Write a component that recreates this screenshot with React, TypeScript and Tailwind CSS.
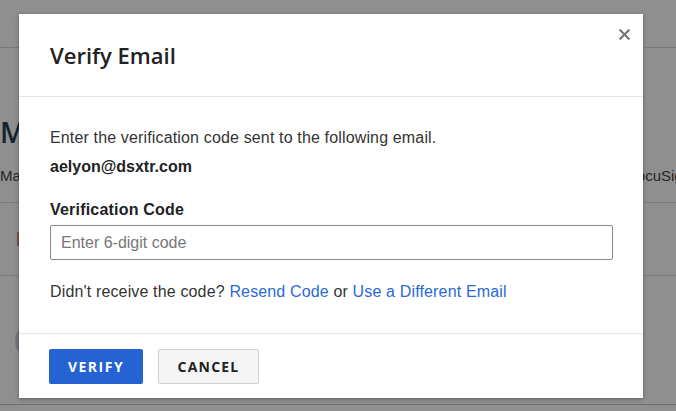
import { X } from "lucide-react";

const sans = "font-['Liberation_Sans',Arial,sans-serif]";
const heading = "font-['Open_Sans','Noto_Sans',sans-serif]";

function BackgroundPage() {
  return (
    <div className={`h-[411px] w-[676px] overflow-hidden bg-white ${sans}`}>
      <div className="h-[48px] border-b border-[#dcdcdc]" />
      <div className="flex h-[155px] flex-col border-b border-[#dcdcdc]">
        <div className={`mt-[66px] text-[28px] leading-[36px] font-semibold text-[#1f3f57] ${heading}`}>
          My Account
        </div>
        <div className="mt-[16px] flex justify-between whitespace-nowrap text-[15px] leading-[20px] text-[#444]">
          <span>Manage your profile and connected services</span>
          <span className="mr-[-15px]">Connected to DocuSign</span>
        </div>
      </div>
      <div className="flex h-[73px] items-center border-b border-[#dcdcdc]">
        <div className="ml-[17px] h-[14px] w-[12px] bg-[#c79a82]" />
      </div>
      <div className="flex h-[128px] items-start">
        <div className="ml-[15px] mt-[46px] h-[38px] w-[38px] rounded-full bg-[#cfcde0]" />
      </div>
      <div className="border-t border-[#c8c8c8]" />
    </div>
  );
}

function VerifyEmailModal() {
  return (
    <div className="absolute left-[19px] top-[14px] flex w-[624px] flex-col bg-white shadow-[0_1px_4px_rgba(0,0,0,0.35)]">
      <div className="relative flex h-[83px] items-center border-b border-[#e6e6e6] px-[31px]">
        <h2 className={`text-[22px] leading-[28px] font-semibold text-[#222] ${heading}`}>Verify Email</h2>
        <button className="absolute right-[8px] top-[10px] p-[2px] text-[#777]">
          <X size={17} strokeWidth={3.2} />
        </button>
      </div>
      <div className={`flex flex-col px-[31px] pt-[31px] pb-[31px] text-[16px] leading-[20px] text-[#333] ${sans}`}>
        <p className="tracking-[0.15px]">Enter the verification code sent to the following email.</p>
        <p className="mt-[9px] font-bold text-[#222]">aelyon@dsxtr.com</p>
        <label className="mt-[23px] font-bold tracking-[0.2px] text-[#222]">Verification Code</label>
        <input
          placeholder="Enter 6-digit code"
          className="mt-[5px] h-[35px] w-[563px] rounded-[2px] border border-[#8a8a8a] px-[10px] text-[16px] text-[#333] placeholder:text-[#777] outline-none"
        />
        <p className="mt-[22px] tracking-[0.15px]">
          Didn't receive the code?{" "}
          <a className="text-[#2a6ad6]">Resend Code</a> or{" "}
          <a className="text-[#2a6ad6]">Use a Different Email</a>
        </p>
      </div>
      <div className={`flex gap-[15px] border-t border-[#e6e6e6] px-[30px] pt-[15px] pb-[14px] ${heading}`}>
        <button className="h-[35px] w-[94px] rounded-[2px] bg-[#2463d1] text-[14px] font-bold tracking-[1.5px] text-white">
          VERIFY
        </button>
        <button className="h-[35px] w-[101px] rounded-[2px] border border-[#cfcfcf] bg-[#f5f5f5] text-[14px] font-bold tracking-[1.2px] text-[#222]">
          CANCEL
        </button>
      </div>
    </div>
  );
}

export default function App() {
  return (
    <div className="relative h-[411px] w-[676px] overflow-hidden">
      <BackgroundPage />
      <div className="absolute inset-0 bg-black/[0.44]" />
      <VerifyEmailModal />
    </div>
  );
}
